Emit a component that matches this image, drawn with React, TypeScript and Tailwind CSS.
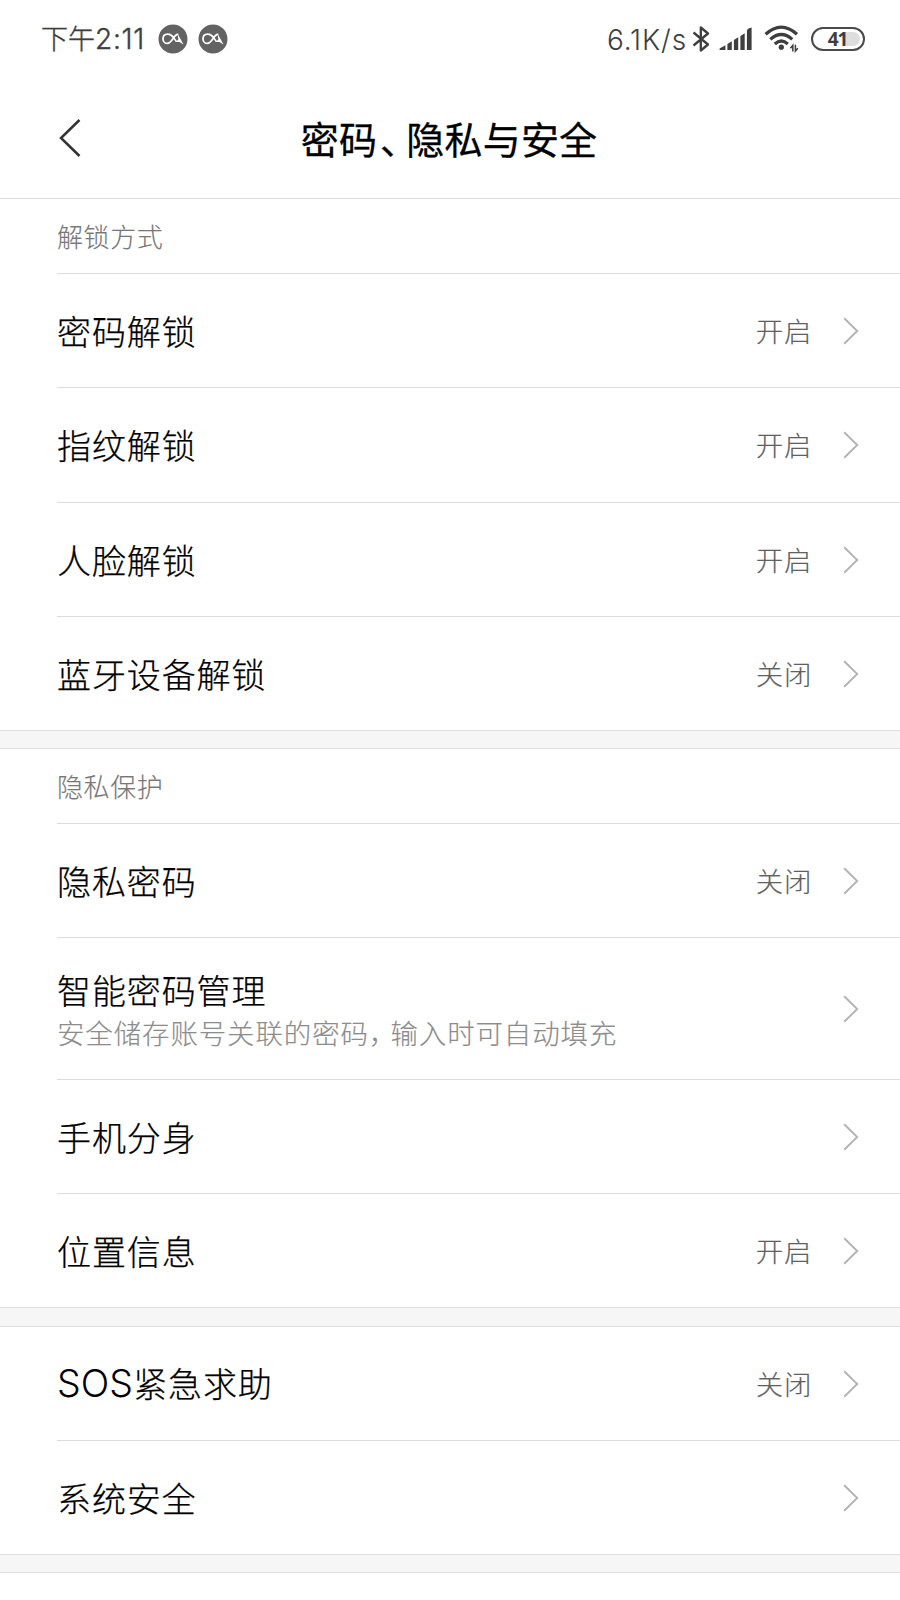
const cjk = "font-['Noto_Sans_CJK_SC',sans-serif]";

function CaBadge() {
  return (
    <svg className="h-[30px] w-[30px]" viewBox="0 0 30 30" fill="none">
      <circle cx="15" cy="15" r="14.5" fill="#636363" />
      <path d="M14.6 12.4C12.8 10.8 11.2 10 9.4 10.2C6.8 10.4 5 12.4 5 14.9C5 17.4 7 19.4 9.5 19.4C13.6 19.4 16 10.6 19.6 10.4" stroke="#fff" strokeWidth="1.8" strokeLinecap="round" />
      <path d="M14.4 12.2Q16.4 14.6 18.2 17.2" stroke="#fff" strokeWidth="1.5" strokeLinecap="round" />
      <path d="M19.4 9.4L25.6 20.4L21.4 18L17.6 17.9L20.4 15.6Z" fill="#fff" />
    </svg>
  );
}

function Bluetooth() {
  return (
    <svg className="h-[28px] w-[18px]" viewBox="0 0 18 28" fill="none" stroke="#3e3e3e" strokeWidth="2.3">
      <path d="M1.5 7.5L16 19.5L8.8 25.5V2.5L16 8.5L1.5 20.5" strokeLinejoin="round" />
    </svg>
  );
}

function Signal() {
  return (
    <svg className="h-[24px] w-[34px]" viewBox="0 0 34 24" fill="#3e3e3e">
      <path d="M.6 23V21.4L6.4 18.2V23ZM8.4 23V16.9L12.8 14.2V23ZM14.9 23V12.9L19.2 10.2V23ZM21.4 23V8.9L25.7 6.2V23ZM27.9 23V4Q28.2 2 30 1.2L32.6 .6V23Z" />
    </svg>
  );
}

function Wifi() {
  return (
    <svg className="h-[28px] w-[36px]" viewBox="0 0 36 28" fill="none" stroke="#3e3e3e" strokeWidth="3.2">
      <path d="M1.6 9.3Q17.3 -4.9 33 9.3" />
      <path d="M6.3 14.4Q17.3 4.6 28.3 14.4" />
      <path d="M10.8 19Q17.3 13 23.8 19" />
      <circle cx="17.3" cy="22.2" r="2.6" fill="#3e3e3e" stroke="none" />
      <path d="M28.8 26.6V20.4L26.4 23.2M31.4 19.8V26L33.8 23.2" strokeWidth="1.5" />
    </svg>
  );
}

function Battery() {
  return (
    <div className="flex h-[24px] w-[54px] items-center rounded-full border-2 border-[#4a4a4a] p-[3px]">
      <div className="flex h-full w-full items-center justify-center rounded-full bg-[linear-gradient(90deg,#fff_65%,#dedede_65%)] pr-[1px] font-['Noto_Sans',sans-serif] text-[19px] leading-none font-bold tracking-[-1px] text-[#3e3e3e]">
        41
      </div>
    </div>
  );
}

function Chevron() {
  return (
    <svg className="h-[28px] w-[16px]" viewBox="0 0 16 28" fill="none">
      <path d="M1.2 1.2L14.2 14L1.2 26.8" stroke="#b3b3b3" strokeWidth="1.9" />
    </svg>
  );
}

type RowProps = { label: string; latin?: string; value?: string; note?: [string, string]; height: string; last?: boolean };

function Row({ label, latin, value, note, height, last }: RowProps) {
  return (
    <div className={`ml-[57px] flex items-center pr-[41px] ${height} ${last ? "" : "border-b border-[#dcdcdc]"}`}>
      <div className={`flex flex-1 flex-col ${note ? "pt-[4px]" : ""}`}>
        <span className="text-[34px] leading-[42px] tracking-[0.9px] text-black [-webkit-text-stroke:0.25px_black]">
          {latin && <span className="font-['Inter',sans-serif] text-[37.5px] tracking-[0.1px] [-webkit-text-stroke:0]">{latin}</span>}
          {label}
        </span>
        {note && (
          <span className="text-[27.5px] leading-[42px] tracking-[0.85px] text-[#8c8c8c] [font-feature-settings:'halt'] [-webkit-text-stroke:0.15px_#8c8c8c]">
            {note[0]}
            <span className="mr-[7px]">，</span>
            {note[1]}
          </span>
        )}
      </div>
      {value && (
        <span className="mr-[31px] pb-[2px] text-[27.5px] leading-[40px] tracking-[0.6px] text-[#606060] [-webkit-text-stroke:0.15px_#606060]">{value}</span>
      )}
      <Chevron />
    </div>
  );
}

function Heading({ text }: { text: string }) {
  return (
    <div className="ml-[57px] flex h-[75px] items-center border-b border-[#dcdcdc] pb-[2px] text-[26px] tracking-[0.6px] text-[#777] [-webkit-text-stroke:0.15px_#777]">
      {text}
    </div>
  );
}

function Band({ height }: { height: string }) {
  return <div className={`border-y border-[#dfdfdf] bg-[#f6f6f6] ${height}`} />;
}

export default function App() {
  return (
    <div className={`h-[1600px] w-[900px] overflow-hidden bg-white font-light ${cjk}`}>
      <div className="flex h-[78px] items-center pr-[35px] pl-[41px] text-[#3e3e3e]">
        <span className="w-[106px] text-[27px] whitespace-nowrap [-webkit-text-stroke:0.4px_#3e3e3e]">
          下午<span className="font-['Inter',sans-serif] text-[28px] tracking-[0.7px]">2:11</span>
        </span>
        <div className="ml-[11px] flex gap-[10px]">
          <CaBadge />
          <CaBadge />
        </div>
        <div className="ml-auto flex items-center">
          <span className="pt-[1px] font-['Inter',sans-serif] text-[28px] tracking-[0.9px]">6.1K/s</span>
          <div className="ml-[5px]"><Bluetooth /></div>
          <div className="ml-[9px]"><Signal /></div>
          <div className="ml-[11px]"><Wifi /></div>
          <div className="ml-[11px]"><Battery /></div>
        </div>
      </div>
      <div className="flex h-[121px] items-center border-b border-[#dcdcdc] px-[59px]">
        <svg className="h-[40px] w-[22px]" viewBox="0 0 22 40" fill="none">
          <path d="M20.5 2L2 20L20.5 38" stroke="#333" strokeWidth="2.5" />
        </svg>
        <h1 className="flex-1 pr-[24px] text-center text-[38px] leading-none font-normal tracking-[0.2px] text-black [font-feature-settings:'halt'] [-webkit-text-stroke:0.3px_black]">
          密码<span className="mr-[7px] ml-[3px]">、</span>隐私与安全
        </h1>
      </div>
      <Heading text="解锁方式" />
      <Row label="密码解锁" value="开启" height="h-[114px]" />
      <Row label="指纹解锁" value="开启" height="h-[115px]" />
      <Row label="人脸解锁" value="开启" height="h-[114px]" />
      <Row label="蓝牙设备解锁" value="关闭" height="h-[113px]" last />
      <Band height="h-[19px]" />
      <Heading text="隐私保护" />
      <Row label="隐私密码" value="关闭" height="h-[114px]" />
      <Row label="智能密码管理" note={["安全储存账号关联的密码", "输入时可自动填充"]} height="h-[142px]" />
      <Row label="手机分身" height="h-[114px]" />
      <Row label="位置信息" value="开启" height="h-[113px]" last />
      <Band height="h-[20px]" />
      <Row latin="SOS" label="紧急求助" value="关闭" height="h-[114px]" />
      <Row label="系统安全" height="h-[113px]" last />
      <Band height="h-[19px]" />
    </div>
  );
}
